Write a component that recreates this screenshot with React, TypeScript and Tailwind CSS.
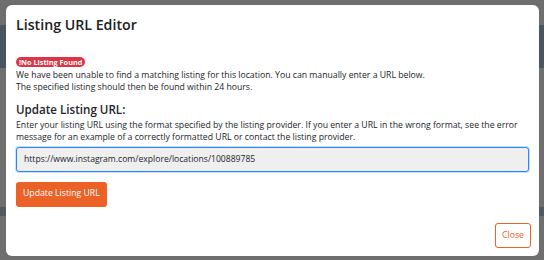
import React from "react";

export default function App() {
  return (
    <div
      className="relative w-[544px] h-[260px] overflow-hidden bg-[#6e6e6e]"
      style={{ fontFamily: '"Open Sans", "Liberation Sans", sans-serif' }}
    >
      {/* faux page behind backdrop */}
      <div className="flex flex-col w-full h-full">
        <div className="h-[25px]" />
        <div className="h-[43px] bg-[#4a5561]" />
        <div className="h-[139px]" />
        <div className="h-[9px] bg-[#4f5a63]" />
      </div>

      {/* modal */}
      <div className="absolute left-[6px] top-[5px] w-[533px] h-[251px] bg-white rounded-[6px] flex flex-col px-[10px] text-[#212529]">
        <h1 className="mt-[10px] text-[14.2px] leading-[20px] font-semibold text-[#222]">
          Listing URL Editor
        </h1>

        <div className="mt-[22px] flex">
          <span className="rounded-full bg-[#dc3545] text-white text-[7.3px] font-bold leading-[10px] px-[3px]">
            !No Listing Found
          </span>
        </div>
        <p className="text-[8.7px] leading-[12.5px] mt-[1.5px]">
          We have been unable to find a matching listing for this location. You can manually enter a URL below.
          <br />
          The specified listing should then be found within 24 hours.
        </p>

        <h2 className="mt-[8px] text-[11.6px] leading-[16px] font-semibold">Update Listing URL:</h2>
        <p className="text-[8.7px] leading-[12.5px] mt-[1px]">
          Enter your listing URL using the format specified by the listing provider. If you enter a URL in the wrong format, see the error message for an example of a correctly formatted URL or contact the listing provider.
        </p>

        <div className="mt-[3px] h-[25px] w-[513px] rounded-[3px] border border-[#2684ff] bg-[#efefef] shadow-[0_0_0_1px_rgba(38,132,255,0.25)] flex items-center px-[7px] text-[8.6px]">
          https://www.instagram.com/explore/locations/100889785
        </div>

        <div className="mt-[10px] flex">
          <button className="h-[25px] px-[7px] rounded-[3px] bg-[#ec6125] text-white text-[8.7px]">
            Update Listing URL
          </button>
        </div>

        <div className="flex-1" />
        <div className="flex justify-end mb-[8px]">
          <button className="h-[25px] w-[36px] -mr-[2px] rounded-[3px] border border-[#ec6125] bg-white text-[#ec6125] text-[8.7px]">
            Close
          </button>
        </div>
      </div>
    </div>
  );
}
